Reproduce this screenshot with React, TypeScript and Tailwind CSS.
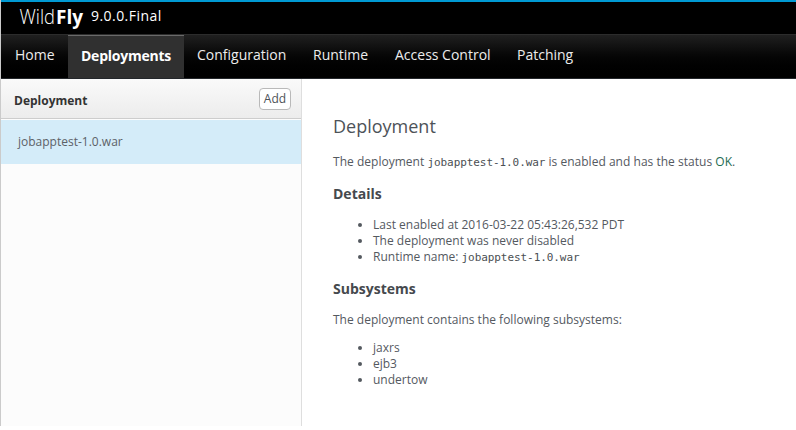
import React from "react";

const navItems = [
  { label: "Home", width: "w-[67px]", pad: "pl-[14px]" },
  { label: "Deployments", width: "w-[116px]", pad: "pl-[13px]", active: true },
  { label: "Configuration", width: "w-[116px]", pad: "pl-[13px]" },
  { label: "Runtime", width: "w-[82px]", pad: "pl-[13px]" },
  { label: "Access Control", width: "w-[122px]", pad: "pl-[13px]" },
  { label: "Patching", width: "w-[84px]", pad: "pl-[13px]" },
];

function Logo() {
  return (
    <svg width="66" height="28" viewBox="0 0 66 28" fill="#fff" className="overflow-visible" aria-label="WildFly">
      <text x="0.5" y="18.5" fontFamily="'Open Sans', sans-serif" fontSize="20.5" fontWeight="300" textLength="35.5" lengthAdjust="spacingAndGlyphs">Wild</text>
      <text x="37" y="18.5" fontFamily="'Open Sans', sans-serif" fontSize="20" fontWeight="700" textLength="27" lengthAdjust="spacingAndGlyphs">Fly</text>
    </svg>
  );
}

function Code({ children }: { children: React.ReactNode }) {
  return <code className="font-['DejaVu_Sans_Mono',monospace] text-[11px] leading-none tracking-[-0.07px] text-[#4b4f53]">{children}</code>;
}

function Header() {
  return (
    <header className="border-t-2 border-[#0099d3] bg-black text-white">
      <div className="flex h-8 items-start pl-[18px]">
        <div className="pt-[3px]"><Logo /></div>
        <span className="ml-[6px] pt-[4px] text-[14px] leading-5 tracking-[0.45px]">9.0.0.Final</span>
      </div>
      <nav className="flex h-[45px] border-y border-t-[#2c2c2c] border-b-[#24272b] bg-linear-to-b from-[#202020] to-black">
        {navItems.map((item) => (
          <a
            key={item.label}
            className={`${item.width} ${item.pad} whitespace-nowrap text-[14px] ${
              item.active
                ? "border-t border-[#6a6a6a] bg-[#303030] font-bold leading-[39px] tracking-[-0.24px] text-white"
                : "border-t border-transparent leading-[37px] text-[#ececec]"
            }`}
          >
            {item.label}
          </a>
        ))}
      </nav>
    </header>
  );
}

function Sidebar() {
  return (
    <aside className="h-[347px] w-[301px] shrink-0 border-r border-[#dedede] bg-[#fcfcfc]">
      <div className="flex h-10 justify-between border-b border-[#cdcdcd] bg-linear-to-b from-[#fafafa] to-[#ececec] pl-[13px] pr-[10px]">
        <h3 className="pt-[14px] text-[12px] font-bold leading-4 text-[#333]">Deployment</h3>
        <button className="mt-[9px] h-[22px] w-8 rounded border border-[#b9b9b9] bg-white text-[12px] leading-5 text-[#4d5258]">Add</button>
      </div>
      <div className="mt-px h-11 bg-[#d4ecf9] pl-[17px] text-[12px] leading-[44px] text-[#5c6167]">jobapptest-1.0.war</div>
    </aside>
  );
}

function Details() {
  return (
    <main className="pl-[31px] pt-[35px] text-[12px] leading-4 text-[#54595f]">
      <h1 className="text-[18px] leading-6 text-[#4d5258]">Deployment</h1>
      <p className="mt-[16px] h-4 whitespace-nowrap tracking-[0.02px]">
        The deployment <Code>jobapptest-1.0.war</Code> is enabled and has the status <span className="text-[#216b52]">OK</span>.
      </p>
      <h2 className="mt-[14px] text-[14px] font-bold leading-5 text-[#45494d]">Details</h2>
      <ul className="mt-[13px] list-disc pl-10">
        <li className="h-4">Last enabled at 2016-03-22 05:43:26,532 PDT</li>
        <li className="h-4">The deployment was never disabled</li>
        <li className="h-4">Runtime name: <Code>jobapptest-1.0.war</Code></li>
      </ul>
      <h2 className="mt-[14px] text-[14px] font-bold leading-5 text-[#45494d]">Subsystems</h2>
      <p className="mt-[13px]">The deployment contains the following subsystems:</p>
      <ul className="mt-3 list-disc pl-10">
        <li>jaxrs</li>
        <li>ejb3</li>
        <li>undertow</li>
      </ul>
    </main>
  );
}

export default function App() {
  return (
    <div className="h-[430px] w-[796px] overflow-hidden bg-white font-['Open_Sans',sans-serif]">
      <div className="h-[426px] border-l border-[#cbcbcb]">
        <Header />
        <div className="flex">
          <Sidebar />
          <Details />
        </div>
      </div>
    </div>
  );
}
